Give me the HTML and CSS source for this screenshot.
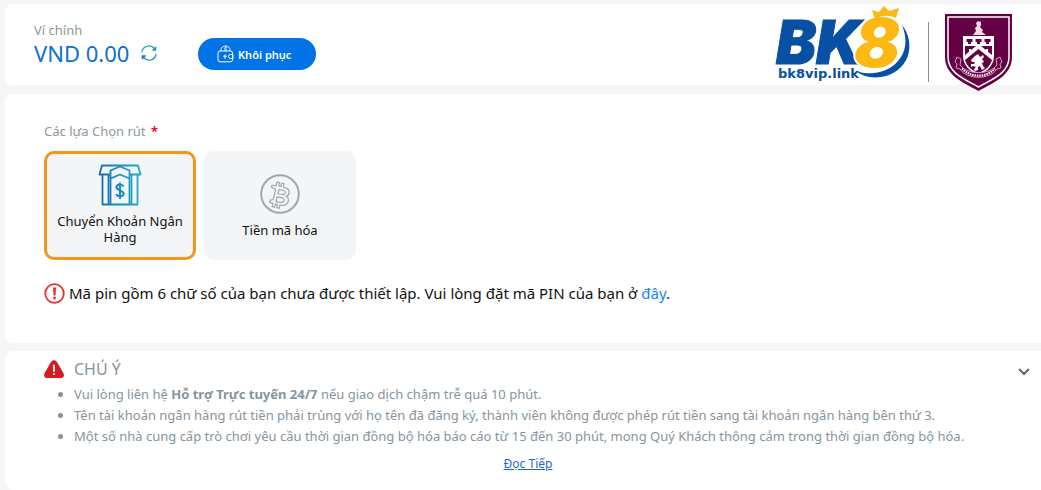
FILE: index.html
```html
<!DOCTYPE html>
<html lang="vi">
<head>
  <meta charset="UTF-8" />
  <meta name="viewport" content="width=device-width, initial-scale=1.0"/>
  <title>Rút tiền</title>
  <link rel="stylesheet" href="styles.css">
</head>
<body>

  <header class="card wallet-bar">
    <div class="wallet">
      <div class="wallet-label">Ví chính</div>
      <div class="wallet-balance">
        <span>VND 0.00</span>
        <button class="refresh-btn" type="button" aria-label="Làm mới">
          <svg width="16" height="16" viewBox="0 0 16 16" fill="none" stroke-width="1.4" stroke-linecap="round">
            <path d="M1 6.500A7 7 0 0 1 13.500 3.800" stroke="#2fa9b3"/>
            <path d="M15 9.500A7 7 0 0 1 2.500 12.200" stroke="#3b9fc0"/>
            <path d="M14.800 2.200v3h-3z" fill="#1d9a9c" stroke="#1d9a9c" stroke-width="1" stroke-linejoin="round"/>
            <path d="M1.200 13.800v-3h3z" fill="#1a6fb5" stroke="#1a6fb5" stroke-width="1" stroke-linejoin="round"/>
          </svg>
        </button>
      </div>
    </div>

    <button class="restore-btn" type="button">
      <svg width="17" height="18" viewBox="0 0 17 18" fill="none" stroke="#fff" stroke-width="1">
        <path d="M4 6V4.800a4.500 3.800 0 0 1 9 0V6"/>
        <rect x="1" y="6" width="14.500" height="10.800" rx="2"/>
        <path d="M16 9.500h-2.500a2 2 0 0 0 0 4H16z"/>
        <path d="M8 14V9.500M6.200 11.200h3.600"/>
        <path d="M9.800 2.800c-2-1-3.200.7-1.300 1.200s1 1.900-1.200 1"/>
      </svg>
      Khôi phục
    </button>

    <div class="brand">
      <svg class="brand-logo" width="136" height="78" viewBox="0 0 136 78" role="img" aria-label="BK8">
        <path d="M126 19C140 37 134 63 110 70C98 73 87 71 80 65C94 70 112 67 122 55C130 46 132 34 126 19Z" fill="#0750a4"/>
        <text class="logo-bk" x="0" y="58">B</text>
        <text class="logo-bk" x="40" y="58">K</text>
        <text class="logo-eight" x="78" y="61">8</text>
        <path d="M96 4L103 6 108 0 113 5 123 2 120 12C113 9 106 9 99 13Z" fill="#fdb813"/>
        <text class="logo-link" x="2" y="72">bk8vip.link</text>
      </svg>
      <span class="brand-divider"></span>
      <svg class="brand-crest" width="69" height="79" viewBox="0 0 69 79" role="img" aria-label="Burnley Football Club">
        <path d="M1 1H68V44C68 62 51 69 34.500 78C18 69 1 62 1 44Z" fill="#650044"/>
        <path d="M4 4H65V44C65 60 49 66 34.500 74C20 66 4 60 4 44Z" fill="none" stroke="#fff" stroke-width="1.500"/>
        <path d="M19 23H50V43C50 53 42 59 34.500 62C27 59 19 53 19 43Z" fill="#fff"/>
        <path d="M21 33H32L21 42ZM48 33H37L48 42Z" fill="#650044"/>
        <path d="M21 47L34.500 36 48 47C46 54 40 58 34.500 60C29 58 23 54 21 47Z" fill="#650044"/>
        <path d="M22.500 26h6v3h-1.500v2h-3v-2h-1.500zM31.500 26h6v3H36v2h-3v-2h-1.500zM40.500 26h6v3H45v2h-3v-2h-1.500z" fill="#650044"/>
        <path d="M25 36h2v3h-2zM42 36h2v3h-2z" fill="#fff"/>
        <path d="M29 22l3-4-1-3 2-2-1-3 2-2 3 1v3l-1 2 3 3-1 2 4 3z" fill="#f1dfe8"/>
        <path d="M31 43l3-2 2 3 3-2 1 2-2 2 2 3-2 1 1 3 2 2-3 2-2-4-2 1 0 3-3 1-1-2 2-2-3-1-2 1 0-3 3 0 1-2-3 0-1-2z" fill="#fff"/>
        <path d="M13 44l4 2-1 6C23 62 46 62 53 52l-1-6 4-2 2 5-2 2 1 4-4 1C46 67 23 67 16 56l-4-1 1-4-2-2z" fill="#650044" stroke="#dcb6cb" stroke-width=".9"/>
        <path d="M18 55.500C27 65 42 65 51 55.500" fill="none" stroke="#f7edf3" stroke-width="2.200" stroke-dasharray="1.600 .8"/>
      </svg>
    </div>
  </header>

  <main class="card withdraw">
    <div class="field-label" id="optionsLabel">Các lựa Chọn rút <span class="required">*</span></div>
    <div class="options" role="group" aria-labelledby="optionsLabel">
      <button class="option active" type="button" aria-pressed="true">
        <svg width="44" height="42" viewBox="0 0 44 42" fill="none" stroke="url(#bankGradient)" stroke-width="1.800" stroke-linejoin="round">
          <defs>
            <linearGradient id="bankGradient" x1="0" y1="0" x2="44" y2="0" gradientUnits="userSpaceOnUse">
              <stop offset="0" stop-color="#1769b5"/>
              <stop offset="1" stop-color="#22b0c9"/>
            </linearGradient>
          </defs>
          <path d="M12.500 10.500H1.500L4 1.500H40L42.500 10.500H31.500"/>
          <path d="M4.500 10.500V40.500H39.500V10.500M10.500 10.500V40M33.500 10.500V40"/>
          <path d="M12.500 40V6.500L22 2.500 31.500 6.500V40M12.500 14.500L22 10.500 31.500 14.500"/>
          <path d="M25.500 22.500C24 19.500 18.500 20 18.500 23.300S25.700 26.500 25.700 29.800 19.500 33 18 30.300M22 18.500V35" stroke-width="2.100"/>
        </svg>
        <span>Chuyển Khoản Ngân Hàng</span>
      </button>
      <button class="option" type="button" aria-pressed="false">
        <svg width="40" height="40" viewBox="0 0 40 40" fill="none" stroke="#a3a5a7" stroke-linejoin="round">
          <circle cx="20" cy="20" r="18.800" stroke-width="2"/>
          <path stroke-width="1.200" d="M12 11L16 12 17 8 19.500 8.600 18.800 12 20.800 12.500 21.600 9 24 9.600 23.200 13C28 14 30 16.500 29 19.500C28.500 21.300 27.400 22 26 22C28.500 23.500 29 25.500 28 28C27 31 24 31.700 20 31L19.200 34.300 16.700 33.700 17.500 30.500 15.500 30 14.700 33.200 12.200 32.600 13 29.300 9.500 28.500 10.500 25.800C12.500 26.300 13 26 13.300 25L15.500 15.800C15.700 14.500 15 14.200 11.500 13.500Z"/>
          <path stroke-width="1.200" d="M19 15.500L18 19.800C22 21 24.800 20.700 25.300 18.800S23 16.300 19 15.500ZM17.200 22.800L16 27.700C20.500 29 23.700 28.700 24.200 26.500S21.500 23.700 17.200 22.800Z"/>
        </svg>
        <span>Tiền mã hóa</span>
      </button>
    </div>
    <p class="pin-notice">
      <svg width="21" height="21" viewBox="0 0 21 21">
        <circle cx="10.500" cy="10.500" r="9.300" fill="none" stroke="#ee2e2e" stroke-width="1.800"/>
        <path d="M9 4.500h3l-.5 8H9.500z" fill="#ee2e2e"/>
        <circle cx="10.500" cy="15" r="1.400" fill="#ee2e2e"/>
      </svg>
      <span>Mã pin gồm 6 chữ số của bạn chưa được thiết lập. Vui lòng đặt mã PIN của bạn ở <a href="#">đây</a>.</span>
    </p>
  </main>

  <section class="card attention">
    <div class="attention-head">
      <svg width="20" height="18" viewBox="0 0 20 18">
        <path d="M7 2C8.500-.4 11.500-.4 13 2L19.300 13C20.700 15.800 19.300 18 17 18H3C.7 18-.7 15.800.7 13Z" fill="#d71920"/>
        <path d="M10 5.500v5.500" stroke="#fff" stroke-width="1.800" stroke-linecap="round"/>
        <circle cx="10" cy="14" r="1.100" fill="#fff"/>
      </svg>
      <h2>CHÚ Ý</h2>
      <button class="toggle-btn" type="button" aria-label="Thu gọn">
        <svg width="12" height="8" viewBox="0 0 12 8" fill="none" stroke="#566a73" stroke-width="2">
          <path d="M1 1l5 5 5-5"/>
        </svg>
      </button>
    </div>
    <ul>
      <li>Vui lòng liên hệ <b>Hỗ trợ Trực tuyến 24/7</b> nếu giao dịch chậm trễ quá 10 phút.</li>
      <li>Tên tài khoản ngân hàng rút tiền phải trùng với họ tên đã đăng ký, thành viên không được phép rút tiền sang tài khoản ngân hàng bên thứ 3.</li>
      <li>Một số nhà cung cấp trò chơi yêu cầu thời gian đồng bộ hóa báo cáo từ 15 đến 30 phút, mong Quý Khách thông cảm trong thời gian đồng bộ hóa.</li>
    </ul>
    <a class="read-more" href="#">Đọc Tiếp</a>
  </section>

</body>
</html>
```
FILE: styles.css
```css
* {
  box-sizing: border-box;
}

body {
  margin: 0;
  padding: 4px 0 0 5px;
  background: #f6f6f6;
  color: #111;
  font-family: "Noto Sans", "Open Sans", sans-serif;
  font-size: 13px;
}

button {
  font-family: inherit;
  border: none;
  cursor: pointer;
}

svg {
  flex: none;
}

.card {
  background: #fff;
  border-radius: 8px 0 0 8px;
  margin-bottom: 8px;
}

.wallet-bar {
  display: flex;
  align-items: center;
  height: 81px;
  margin-bottom: 9px;
  padding: 0 29px;
}

.wallet {
  width: 164px;
  padding-bottom: 2px;
}

.wallet-label {
  color: #8b98a1;
  line-height: 18px;
}

.wallet-balance {
  display: flex;
  align-items: center;
  gap: 12px;
  color: #0a6fd6;
  font-size: 22px;
  line-height: 28px;
  white-space: nowrap;
}

.refresh-btn {
  display: flex;
  padding: 0;
  background: none;
}

.restore-btn {
  display: flex;
  align-items: center;
  gap: 4px;
  height: 32px;
  margin-top: 19px;
  padding: 0 25px 0 19px;
  border-radius: 16px;
  background: #0073e6;
  color: #fff;
  font-size: 11px;
  font-weight: 600;
  white-space: nowrap;
}

.brand {
  display: flex;
  align-items: center;
  margin-left: auto;
}

.brand-logo {
  overflow: visible;
}

.brand-divider {
  width: 1px;
  height: 60px;
  margin: 14px 15px 0 16px;
  background: #8b8b90;
}

.brand-crest {
  margin: 16px -1px 0 0;
}

.logo-bk,
.logo-eight {
  font-family: Inter, sans-serif;
  font-style: italic;
  font-weight: 900;
}

.logo-bk {
  font-size: 60px;
  fill: #0750a4;
  stroke: #0750a4;
  stroke-width: 1px;
}

.logo-eight {
  font-size: 68px;
  fill: #fdb813;
  stroke: #fff;
  stroke-width: 4px;
  paint-order: stroke;
}

.logo-link {
  font-family: "DejaVu Sans", sans-serif;
  font-size: 13px;
  font-weight: bold;
  fill: #0750a4;
}

.withdraw {
  padding: 27px 39px 39px;
}

.field-label {
  color: #8b98a1;
  line-height: 20px;
}

.required {
  margin-left: 2px;
  color: #e0102f;
  font-weight: bold;
}

.options {
  display: flex;
  gap: 8px;
  margin-top: 10px;
}

.option {
  display: flex;
  flex-direction: column;
  align-items: center;
  justify-content: center;
  gap: 8px;
  width: 152px;
  height: 109px;
  padding: 0 8px;
  border-radius: 10px;
  background: #f3f5f7;
  color: #111;
  font-size: 13px;
  line-height: 16px;
}

.option.active {
  gap: 7px;
  padding-bottom: 2px;
  border: 3px solid #f7941d;
}

.pin-notice {
  display: flex;
  align-items: center;
  gap: 4px;
  margin: 22px 0 0;
  font-size: 15px;
  line-height: 22px;
}

.pin-notice a {
  color: #1a82f7;
  text-decoration: none;
}

.attention {
  min-height: 139px;
  margin-bottom: 0;
  padding: 6px 11px 8px 39px;
  color: #8594a0;
}

.attention-head {
  display: flex;
  align-items: center;
  gap: 10px;
}

.attention-head h2 {
  margin: 0;
  font-size: 16px;
  font-weight: 400;
  line-height: 24px;
}

.toggle-btn {
  display: flex;
  margin-left: auto;
  padding: 6px 0 0;
  background: none;
}

.attention ul {
  margin: 3px 0 0;
  padding-left: 30px;
  line-height: 21px;
}

.read-more {
  display: block;
  width: max-content;
  margin: 9px auto 0;
  padding-right: 18px;
  color: #1a66d6;
  font-size: 12px;
  line-height: 16px;
}
```
